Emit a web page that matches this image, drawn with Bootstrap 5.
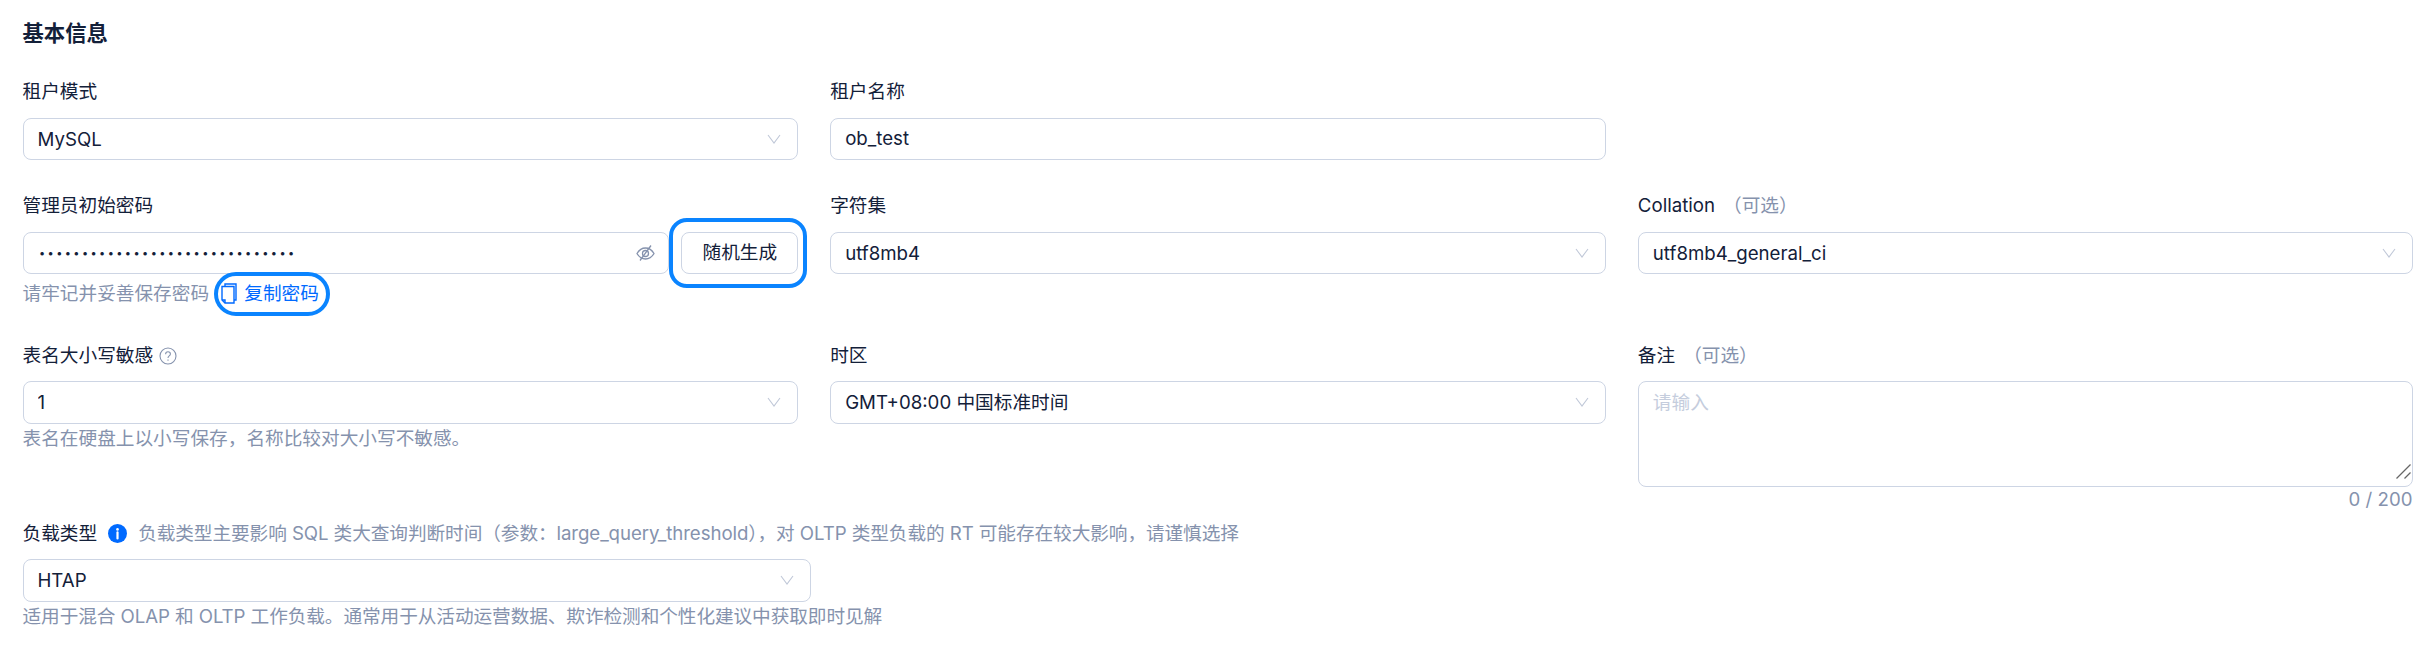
<!DOCTYPE html>
<html lang="zh-CN">
<head>
<meta charset="utf-8">
<title>基本信息</title>
<link rel="stylesheet" href="https://cdn.jsdelivr.net/npm/bootstrap@5.3.0/dist/css/bootstrap.min.css">
<style>
:root{--ink:#132039;--mute:#8592ad;--line:#cdd5e4;--ring:#0a84ff;--blue:#006aff}
html,body{background:#fff}
body{font-family:Inter,"Noto Sans CJK SC",sans-serif;font-size:18.67px;line-height:28px;color:var(--ink);overflow:hidden}
.sheet{padding:18px 22.5px 0}
.sheet-title{font-size:21.33px;line-height:30px;font-weight:600;margin:0 0 30px}
.fields{--bs-gutter-x:32px;--bs-gutter-y:0}
.row-a{height:114px}
.row-b{height:149.5px}
.row-c{height:178px}
.fld-label{display:flex;align-items:center;margin:0 0 11.5px;line-height:28px;font-size:18.67px;color:var(--ink)}
.fld-opt{color:var(--mute)}
.fld-ctl,.fld-ctl:focus{height:42.5px;padding:0 14px;font-size:18.67px;line-height:28px;color:var(--ink);border:1.33px solid var(--line);border-radius:8px;box-shadow:none}
.fld-sel,.fld-sel:focus{padding-top:2px;--bs-form-select-bg-img:url("data:image/svg+xml,%3csvg xmlns='http://www.w3.org/2000/svg' viewBox='0 0 14 10'%3e%3cpath fill='none' stroke='%23c0c8d8' stroke-width='1.1' d='M1 1l6 8 6-8'/%3e%3c/svg%3e");background-position:right 16px center;background-size:14px 10px}
.fld-note{color:var(--mute);font-size:18.67px;line-height:28px;margin:0}
.fld-sel+.fld-note{margin-top:1px}
.fld-tight{letter-spacing:-.08px}
.pw-line{display:flex;gap:12px}
.pw-box{position:relative;flex:1 1 auto}
.pw-input,.pw-input:focus{letter-spacing:2.4px;font-size:11px;padding:0 48px 0 15.5px}
.pw-eye{position:absolute;right:14.5px;top:12.5px;width:19px;height:18px}
.ringed{position:relative;display:inline-flex}
.ringed::after{content:"";position:absolute;border:4.5px solid var(--ring);pointer-events:none}
.gen-btn,.gen-btn:hover{width:116.7px;height:42.5px;padding:0;font-size:18.67px;line-height:28px;color:var(--ink);background:#fff;border:1.33px solid var(--line);border-radius:8px}
.ring-gen::after{inset:-13.5px -8.4px -13.7px -12.3px;border-radius:18px}
.copy-line{display:flex;align-items:center;margin-top:5.5px}
.copy-link{display:inline-flex;align-items:center;color:var(--blue);text-decoration:none;margin-left:11.7px}
.copy-link svg{width:16px;height:21px;margin-right:7.5px}
.ring-copy::after{inset:-8px -11px -8.5px -6.7px;border-radius:23px;border-width:4px}
.help-ico{width:18px;height:18px;margin-left:6px}
.info-ico{width:19px;height:19px;margin:0 11px 0 11px;flex:none}
.area-box{position:relative}
.fld-area,.fld-area:focus{height:105.5px;padding:6.5px 14px;resize:none}
.fld-area::placeholder{color:#c5cddd;opacity:1}
.area-grip{position:absolute;right:2.5px;bottom:8px;width:15px;height:15px}
.fld-count{text-align:right;color:var(--mute);line-height:26.5px;padding-right:1px}
.load-sel{width:788px}
</style>
</head>
<body>
<main class="sheet">
  <h2 class="sheet-title">基本信息</h2>

  <div class="row fields row-a">
    <div class="col-4">
      <label class="fld-label">租户模式</label>
      <select class="form-select fld-ctl fld-sel"><option>MySQL</option></select>
    </div>
    <div class="col-4">
      <label class="fld-label">租户名称</label>
      <input class="form-control fld-ctl" value="ob_test">
    </div>
    <div class="col-4"></div>
  </div>

  <div class="row fields row-b">
    <div class="col-4">
      <label class="fld-label">管理员初始密码</label>
      <div class="pw-line">
        <div class="pw-box">
          <input class="form-control fld-ctl pw-input" type="password" value="abcdefghijklmnopqrstuvwxyz1234">
          <svg class="pw-eye" viewBox="0 0 19 18" fill="none" stroke="#8592ad" stroke-width="1.3"><path d="M1 9.5C3.2 5.8 6 4 9.5 4s6.3 1.8 8.5 5.5C15.8 13.2 13 15 9.5 15S3.2 13.2 1 9.5z"/><circle cx="9.5" cy="9.5" r="3"/><path d="M15 1.5 4 16.5"/></svg>
        </div>
        <span class="ringed ring-gen"><button type="button" class="btn gen-btn">随机生成</button></span>
      </div>
      <div class="copy-line fld-note">
        <span>请牢记并妥善保存密码</span>
        <span class="ringed ring-copy copy-link">
          <svg viewBox="0 0 16 21" fill="none" stroke="#006aff" stroke-width="1.4"><path d="M4 3V1h11v16h-2"/><path d="M1 3.5h12V20H4l-3-3z"/><path d="M1 17h3v3"/></svg>复制密码
        </span>
      </div>
    </div>
    <div class="col-4">
      <label class="fld-label">字符集</label>
      <select class="form-select fld-ctl fld-sel"><option>utf8mb4</option></select>
    </div>
    <div class="col-4">
      <label class="fld-label">Collation<span class="fld-opt ms-2">（可选）</span></label>
      <select class="form-select fld-ctl fld-sel"><option>utf8mb4_general_ci</option></select>
    </div>
  </div>

  <div class="row fields row-c">
    <div class="col-4">
      <label class="fld-label">表名大小写敏感
        <svg class="help-ico" viewBox="0 0 18 18" fill="none" stroke="#8592ad" stroke-width="1.1"><circle cx="9" cy="9" r="8"/><path d="M6.6 7.2c0-1.5 1-2.4 2.4-2.4s2.4.9 2.4 2.2c0 1.9-2.4 1.9-2.4 3.9"/><path d="M9 12.4v1.3"/></svg>
      </label>
      <select class="form-select fld-ctl fld-sel"><option>1</option></select>
      <p class="fld-note">表名在硬盘上以小写保存，名称比较对大小写不敏感。</p>
    </div>
    <div class="col-4">
      <label class="fld-label">时区</label>
      <select class="form-select fld-ctl fld-sel"><option>GMT+08:00 中国标准时间</option></select>
    </div>
    <div class="col-4">
      <label class="fld-label">备注<span class="fld-opt ms-2">（可选）</span></label>
      <div class="area-box">
        <textarea class="form-control fld-ctl fld-area" placeholder="请输入"></textarea>
        <svg class="area-grip" viewBox="0 0 15 15" fill="none" stroke="#666" stroke-width="1.2"><path d="M.5 14.5 14.5.5"/><path d="M8.5 14.5l6-6"/></svg>
      </div>
      <div class="fld-count">0 / 200</div>
    </div>
  </div>

  <div class="row fields">
    <div class="col-12">
      <label class="fld-label">负载类型
        <svg class="info-ico" viewBox="0 0 19 19"><circle cx="9.5" cy="9.5" r="9.5" fill="#006aff"/><circle cx="9.5" cy="5.4" r="1.3" fill="#fff"/><path d="M9.5 8.4v6" stroke="#fff" stroke-width="2.2" stroke-linecap="round"/></svg>
        <span class="fld-opt fld-tight">负载类型主要影响 SQL 类大查询判断时间（参数：large_query_threshold），对 OLTP 类型负载的 RT 可能存在较大影响，请谨慎选择</span>
      </label>
      <select class="form-select fld-ctl fld-sel load-sel"><option>HTAP</option></select>
      <p class="fld-note fld-tight">适用于混合 OLAP 和 OLTP 工作负载。通常用于从活动运营数据、欺诈检测和个性化建议中获取即时见解</p>
    </div>
  </div>
</main>
<script src="https://cdn.jsdelivr.net/npm/bootstrap@5.3.0/dist/js/bootstrap.bundle.min.js"></script>
</body>
</html>
